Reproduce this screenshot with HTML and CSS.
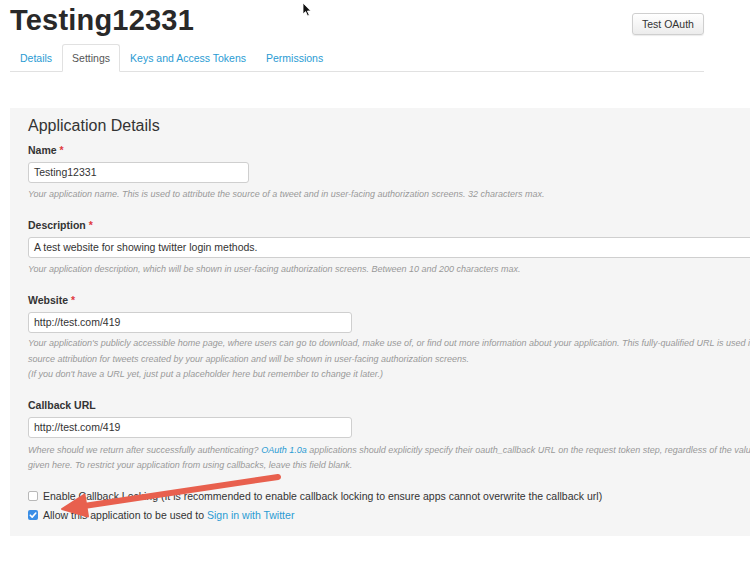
FILE: index.html
```html
<!DOCTYPE html>
<html>
<head>
<meta charset="utf-8">
<link rel="stylesheet" href="styles.css">
</head>
<body>
<div class="page">
  <div class="top">
    <header class="header">
      <h1 class="title">Testing12331</h1>
      <button class="btn">Test OAuth</button>
    </header>
    <ul class="tabs">
      <li class="tab"><a>Details</a></li>
      <li class="tab active"><a>Settings</a></li>
      <li class="tab"><a>Keys and Access Tokens</a></li>
      <li class="tab"><a>Permissions</a></li>
    </ul>
  </div>

  <section class="panel">
    <h2 class="panel-title">Application Details</h2>

    <div class="field">
      <div class="label">Name <span class="req">*</span></div>
      <div class="input w-name">Testing12331</div>
      <div class="help">Your application name. This is used to attribute the source of a tweet and in user-facing authorization screens. 32 characters max.</div>
    </div>

    <div class="field">
      <div class="label">Description <span class="req">*</span></div>
      <div class="input w-desc">A test website for showing twitter login methods.</div>
      <div class="help">Your application description, which will be shown in user-facing authorization screens. Between 10 and 200 characters max.</div>
    </div>

    <div class="field field-web">
      <div class="label">Website <span class="req">*</span></div>
      <div class="input w-url">http://test.com/419</div>
      <div class="help multi">Your application's publicly accessible home page, where users can go to download, make use of, or find out more information about your application. This fully-qualified URL is used in<br>source attribution for tweets created by your application and will be shown in user-facing authorization screens.<br>(If you don't have a URL yet, just put a placeholder here but remember to change it later.)</div>
    </div>

    <div class="field field-last">
      <div class="label">Callback URL</div>
      <div class="input w-url">http://test.com/419</div>
      <div class="help tight">Where should we return after successfully authenticating? <a class="link">OAuth 1.0a</a> applications should explicitly specify their oauth_callback URL on the request token step, regardless of the value<br>given here. To restrict your application from using callbacks, leave this field blank.</div>
    </div>

    <div class="checks">
      <div class="check-row"><span class="cb"></span><span>Enable Callback Locking (It is recommended to enable callback locking to ensure apps cannot overwrite the callback url)</span></div>
      <div class="check-row"><span class="cb checked"><svg viewBox="0 0 10 10" width="10" height="10"><path d="M2.3 5.2 L4.2 7.1 L7.8 3" fill="none" stroke="#fff" stroke-width="1.6" stroke-linecap="round" stroke-linejoin="round"/></svg></span><span>Allow this application to be used to <a class="link">Sign in with Twitter</a></span></div>
    </div>
  </section>
</div>

<svg class="annot" width="750" height="562" viewBox="0 0 750 562">
  <line x1="278" y1="477" x2="84" y2="506" stroke="#e8604e" stroke-width="6" stroke-linecap="round"/>
  <polygon points="62,509 84.5,494.5 88,516.5" fill="#e8604e" stroke="#e8604e" stroke-width="2" stroke-linejoin="round"/>
</svg>

<svg class="cursor" width="10" height="15" viewBox="0 0 10 15">
  <path d="M1 1 L1 12 L3.6 9.6 L5.6 14 L7.3 13.2 L5.4 9 L8.8 9 Z" fill="#111" stroke="#fff" stroke-width="0.8"/>
</svg>
</body>
</html>
```

FILE: styles.css
```css
html, body {
  margin: 0;
  padding: 0;
  background: #fff;
  overflow: hidden;
  font-family: "Liberation Sans", Arial, sans-serif;
  color: #333;
}
.page {
  width: 750px;
  height: 562px;
  overflow: hidden;
}
.top {
  width: 694px;
  margin-left: 10px;
}
.header {
  display: flex;
  justify-content: space-between;
  align-items: flex-start;
  padding-top: 3px;
}
.title {
  margin: 0;
  font-size: 29px;
  line-height: 34px;
  font-weight: bold;
  color: #292929;
  letter-spacing: 0.2px;
}
.btn {
  margin-top: 10px;
  width: 72px;
  height: 22px;
  padding: 0;
  font-family: "Liberation Sans", Arial, sans-serif;
  font-size: 10.5px;
  color: #333;
  background: linear-gradient(#ffffff, #ececec);
  border: 1px solid #cfcfcf;
  border-radius: 3px;
  box-shadow: 0 1px 1px rgba(0,0,0,0.08);
}
.tabs {
  list-style: none;
  margin: 7px 0 0 0;
  padding: 0;
  display: flex;
  gap: 0;
  border-bottom: 1px solid #e1e1e1;
}
.tab {
  margin-bottom: -1px;
  padding: 7px 9px 6px 9px;
  font-size: 10.5px;
  line-height: 13px;
  border: 1px solid transparent;
  border-radius: 3px 3px 0 0;
}
.tab a {
  color: #2a9bd3;
}
.tab.active {
  border-color: #e1e1e1;
  border-bottom-color: #fff;
  background: #fff;
}
.tab.active a {
  color: #555;
}
.panel {
  margin: 36px 0 0 10px;
  width: 760px;
  box-sizing: border-box;
  background: #f5f5f5;
  padding: 8px 0 11px 18px;
}
.panel-title {
  margin: 0 0 7px 0;
  font-size: 16px;
  line-height: 20px;
  font-weight: normal;
  color: #333;
}
.field {
  margin-bottom: 16px;
}
.field-web {
  margin-bottom: 15px;
}
.field-last {
  margin-bottom: 0;
}
.label {
  font-size: 10.5px;
  line-height: 14px;
  font-weight: bold;
  color: #333;
  margin-bottom: 5px;
}
.req {
  color: #e0393e;
}
.input {
  box-sizing: border-box;
  height: 21px;
  background: #fff;
  border: 1px solid #cfcfcf;
  border-radius: 3px;
  padding: 0 5px;
  font-size: 10.5px;
  line-height: 19px;
  color: #333;
  white-space: nowrap;
}
.w-name { width: 221px; }
.w-desc { width: 740px; }
.w-url { width: 324px; }
.help {
  margin-top: 3px;
  font-size: 9px;
  line-height: 16px;
  font-style: italic;
  color: #999;
  white-space: nowrap;
}
.help.multi {
  line-height: 15.5px;
}
.help.tight {
  margin-top: 5px;
  line-height: 15.5px;
}
.link {
  color: #2a9bd3;
}
.checks {
  margin-top: 13px;
}
.check-row {
  display: flex;
  align-items: center;
  height: 19px;
  font-size: 10.5px;
  color: #333;
  white-space: nowrap;
}
.cb {
  box-sizing: border-box;
  width: 10px;
  height: 10px;
  margin-right: 5px;
  border: 1px solid #b8b8b8;
  border-radius: 2px;
  background: #fff;
  display: flex;
}
.cb.checked {
  border: none;
  background: #3a8ee6;
}
.annot {
  position: absolute;
  left: 0;
  top: 0;
  pointer-events: none;
}
.cursor {
  position: absolute;
  left: 302px;
  top: 2px;
}
```
